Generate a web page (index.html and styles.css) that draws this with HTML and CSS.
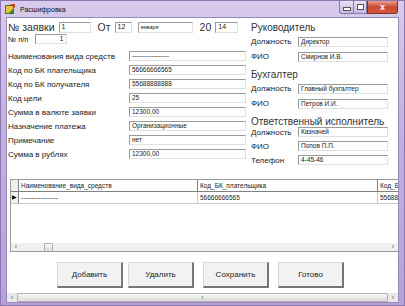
FILE: index.html
```html
<!DOCTYPE html>
<html lang="ru">
<head>
    <meta charset="UTF-8">
    <title>Расшифровка</title>
    <link rel="stylesheet" href="styles.css">
</head>
<body>
    <div class="window">
        <div class="titlebar">
            <svg class="app-icon" width="12" height="12" viewBox="0 0 12 12">
                <rect x="1" y="2" width="9" height="9" fill="#3a7d2a"/>
                <path d="M2 3 L9 3 L9 6 L5 10 L2 10 Z" fill="#e8c23a"/>
                <path d="M6 1 L11 1 L11 5 Z" fill="#d23a2a"/>
            </svg>
            <span class="title">Расшифровка</span>
            <div class="caption-buttons">
                <div class="cap-btn min"><span></span></div>
                <div class="cap-btn max"><span></span></div>
                <div class="cap-btn close">x</div>
            </div>
        </div>

        <div class="client">
            <div class="form">
                <div class="left">
                    <div class="top-row">
                        <span class="big">№ заявки</span>
                        <div class="box w32">1</div>
                        <span class="big ot">От</span>
                        <div class="box w17">12</div>
                        <div class="box w55 tiny">января</div>
                        <span class="big year">20</span>
                        <div class="box w23">14</div>
                    </div>
                    <div class="num-row">
                        <span>№ п/п</span>
                        <div class="box w32 right-text">1</div>
                    </div>
                    <div class="fields">
                        <span>Наименования вида средств</span><div class="box">-----------------</div>
                        <span>Код по БК плательщика</span><div class="box">56666666565</div>
                        <span>Код по БК получателя</span><div class="box">55688888888</div>
                        <span>Код цели</span><div class="box">25</div>
                        <span>Сумма в валюте заявки</span><div class="box">12300,00</div>
                        <span>Назначение платежа</span><div class="box">Организационные</div>
                        <span>Примечание</span><div class="box">нет</div>
                        <span>Сумма в рублях</span><div class="box">12300,00</div>
                    </div>
                </div>

                <div class="right">
                    <div class="group-title">Руководитель</div>
                    <div class="pairs">
                        <span>Должность</span><div class="box">Директор</div>
                        <span>ФИО</span><div class="box">Смирнов И.В.</div>
                    </div>
                    <div class="group-title">Бухгалтер</div>
                    <div class="pairs">
                        <span>Должность</span><div class="box">Главный бухгалтер</div>
                        <span>ФИО</span><div class="box">Петров И.И.</div>
                    </div>
                    <div class="group-title last">Ответственный исполнитель</div>
                    <div class="pairs tight">
                        <span>Должность</span><div class="box">Казначей</div>
                        <span>ФИО</span><div class="box">Попов П.П.</div>
                        <span>Телефон</span><div class="box">4-45-46</div>
                    </div>
                </div>
            </div>

            <div class="grid">
                <div class="grid-body">
                    <div class="grid-row head">
                        <div class="ind"></div>
                        <div class="cell c1">Наименование_вида_средств</div>
                        <div class="cell c2">Код_БК_плательщика</div>
                        <div class="cell c3">Код_БК</div>
                    </div>
                    <div class="grid-row">
                        <div class="ind current">&#9654;</div>
                        <div class="cell c1">-----------------</div>
                        <div class="cell c2">56666666565</div>
                        <div class="cell c3">55688</div>
                    </div>
                </div>
                <div class="hscroll small">
                    <div class="arrow">&#8249;</div>
                    <div class="track"><div class="thumb"></div></div>
                    <div class="arrow">&#8250;</div>
                </div>
            </div>

            <div class="buttons">
                <button class="btn">Добавить</button>
                <button class="btn">Удалить</button>
                <button class="btn gap">Сохранить</button>
                <button class="btn gap">Готово</button>
            </div>

            <div class="hscroll bottom">
                <div class="arrow">&#8249;</div>
                <div class="track"><div class="thumb wide">&#8801;</div></div>
                <div class="arrow">&#8250;</div>
            </div>
        </div>
    </div>
</body>
</html>
```

FILE: styles.css
```css
body {
    margin: 0;
    padding: 0;
    font-family: "Liberation Sans", Arial, sans-serif;
    background: #fff;
}
.window {
    width: 405px;
    height: 306px;
    box-sizing: border-box;
    background: linear-gradient(#d8cbec, #c3b1df 40%, #b7a2d8);
    border: 1px solid #8c78b0;
    display: flex;
    flex-direction: column;
}
.titlebar {
    height: 16px;
    flex: none;
    display: flex;
    align-items: center;
    padding-left: 3px;
}
.app-icon {
    margin-right: 4px;
}
.title {
    font-size: 7px;
    color: #111;
}
.caption-buttons {
    margin-left: auto;
    margin-right: 6px;
    display: flex;
    align-self: flex-start;
}
.cap-btn {
    height: 13px;
    border: 1px solid #8a78a8;
    border-top: none;
    box-sizing: border-box;
    background: linear-gradient(#eae2f4, #c8b8e0);
    display: flex;
    align-items: center;
    justify-content: center;
}
.cap-btn.min, .cap-btn.max {
    width: 14px;
}
.cap-btn.min {
    border-bottom-left-radius: 3px;
    border-right: none;
}
.cap-btn.min span {
    width: 6px;
    height: 2px;
    background: #fff;
    border: 1px solid #555;
    margin-top: 4px;
}
.cap-btn.max span {
    width: 5px;
    height: 4px;
    border: 1px solid #555;
    background: #fff;
}
.cap-btn.close {
    width: 31px;
    background: linear-gradient(#e9a08e, #c84a34 50%, #d2583c);
    color: #fff;
    font-size: 9px;
    font-weight: bold;
    border-color: #7c3022;
    border-bottom-right-radius: 3px;
}
.client {
    flex: 1;
    min-height: 0;
    margin: 0 5px 2px 5px;
    background: #fff;
    border: 1px solid #9a8abc;
    display: flex;
    flex-direction: column;
    color: #222;
    font-size: 8px;
}
.form {
    display: flex;
    flex: none;
    padding: 3px 0 0 1px;
    height: 154px;
}
.left {
    width: 243px;
}
.box {
    height: 10px;
    box-sizing: border-box;
    border: 1px solid #9a9a9a;
    border-right-color: #e0e0e0;
    border-bottom-color: #e0e0e0;
    font-size: 6.5px;
    line-height: 8px;
    padding-left: 2px;
    white-space: nowrap;
    overflow: hidden;
    background: #fff;
}
.big {
    font-size: 10.5px;
    color: #333;
}
.top-row {
    display: flex;
    align-items: center;
    height: 12px;
}
.top-row .box {
    height: 11px;
    font-size: 7px;
    margin-left: 4px;
}
.w32 { width: 32px; }
.w17 { width: 17px; }
.w55 { width: 55px; margin-left: 6px !important; }
.w23 { width: 23px; }
.tiny { font-size: 5.5px !important; }
.ot { margin-left: 7px; }
.year { margin-left: 7px; }
.right-text {
    text-align: right;
    padding-right: 3px;
}
.num-row {
    display: flex;
    align-items: center;
    margin-top: 1px;
    height: 10px;
    font-size: 7.5px;
}
.num-row .box {
    margin-left: 7px;
    font-size: 7px;
}
.fields {
    display: grid;
    grid-template-columns: 121px 117px;
    grid-auto-rows: 14px;
    align-items: center;
    margin-top: 5px;
}
.fields span, .pairs span {
    white-space: nowrap;
}
.right {
    width: 137px;
    padding-top: 1px;
}
.group-title {
    font-size: 10px;
    color: #333;
    height: 12px;
    line-height: 12px;
    white-space: nowrap;
}
.group-title.last {
    margin-top: 3px;
}
.pairs {
    display: grid;
    grid-template-columns: 47px 90px;
    grid-auto-rows: 15px;
    align-items: center;
    margin-bottom: 5px;
}
.pairs.tight {
    grid-auto-rows: 14px;
    margin-top: -3px;
}
.grid {
    flex: none;
    margin: 4px 0 0 3px;
    height: 73px;
    box-sizing: border-box;
    border: 1px solid #9a9a9a;
    border-right: none;
    display: flex;
    flex-direction: column;
    overflow: hidden;
}
.grid-body {
    flex: 1;
}
.grid-row {
    display: flex;
    height: 11px;
    border-bottom: 1px solid #c8c8c8;
    font-size: 6.5px;
    line-height: 11px;
}
.grid-row.head {
    border-bottom: 1px solid #808080;
}
.ind {
    width: 7px;
    flex: none;
    border-right: 1px solid #808080;
    background: #f0f0f0;
    font-size: 6px;
    text-align: center;
    color: #000;
}
.cell {
    flex: none;
    padding-left: 2px;
    box-sizing: border-box;
    border-right: 1px solid #c8c8c8;
    white-space: nowrap;
    overflow: hidden;
}
.head .cell {
    border-right-color: #808080;
}
.c1 { width: 179px; }
.c2 { width: 180px; }
.c3 {
    flex: 1;
    min-width: 0;
    border-right: none;
}
.hscroll {
    display: flex;
    flex: none;
    align-items: center;
    height: 8px;
    background: #f0f0f0;
    font-size: 7px;
    color: #555;
}
.arrow {
    width: 10px;
    text-align: center;
    line-height: 8px;
}
.track {
    flex: 1;
    height: 8px;
    position: relative;
}
.thumb {
    position: absolute;
    left: 23px;
    top: 0;
    width: 7px;
    height: 7px;
    border: 1px solid #b0b0b0;
    border-radius: 1px;
    background: linear-gradient(#f8f8f8, #dcdcdc);
}
.thumb.wide {
    left: 0;
    right: 0;
    width: auto;
    font-size: 5px;
    text-align: center;
    line-height: 7px;
    color: #888;
}
.buttons {
    display: flex;
    flex: none;
    padding-left: 50px;
    margin-top: 10px;
    gap: 5px;
}
.btn {
    width: 66px;
    height: 26px;
    font-family: "Liberation Sans", Arial, sans-serif;
    font-size: 8px;
    color: #222;
    background: #f2f2f2;
    border: 1px solid #d8d8d8;
    border-right: 2px solid #777;
    border-bottom: 2px solid #777;
    padding: 0;
}
.btn.gap {
    margin-left: 4px;
}
.hscroll.bottom {
    margin-top: auto;
    height: 9px;
    background: #e8e8e8;
}
.hscroll.bottom .track {
    height: 9px;
}
```
